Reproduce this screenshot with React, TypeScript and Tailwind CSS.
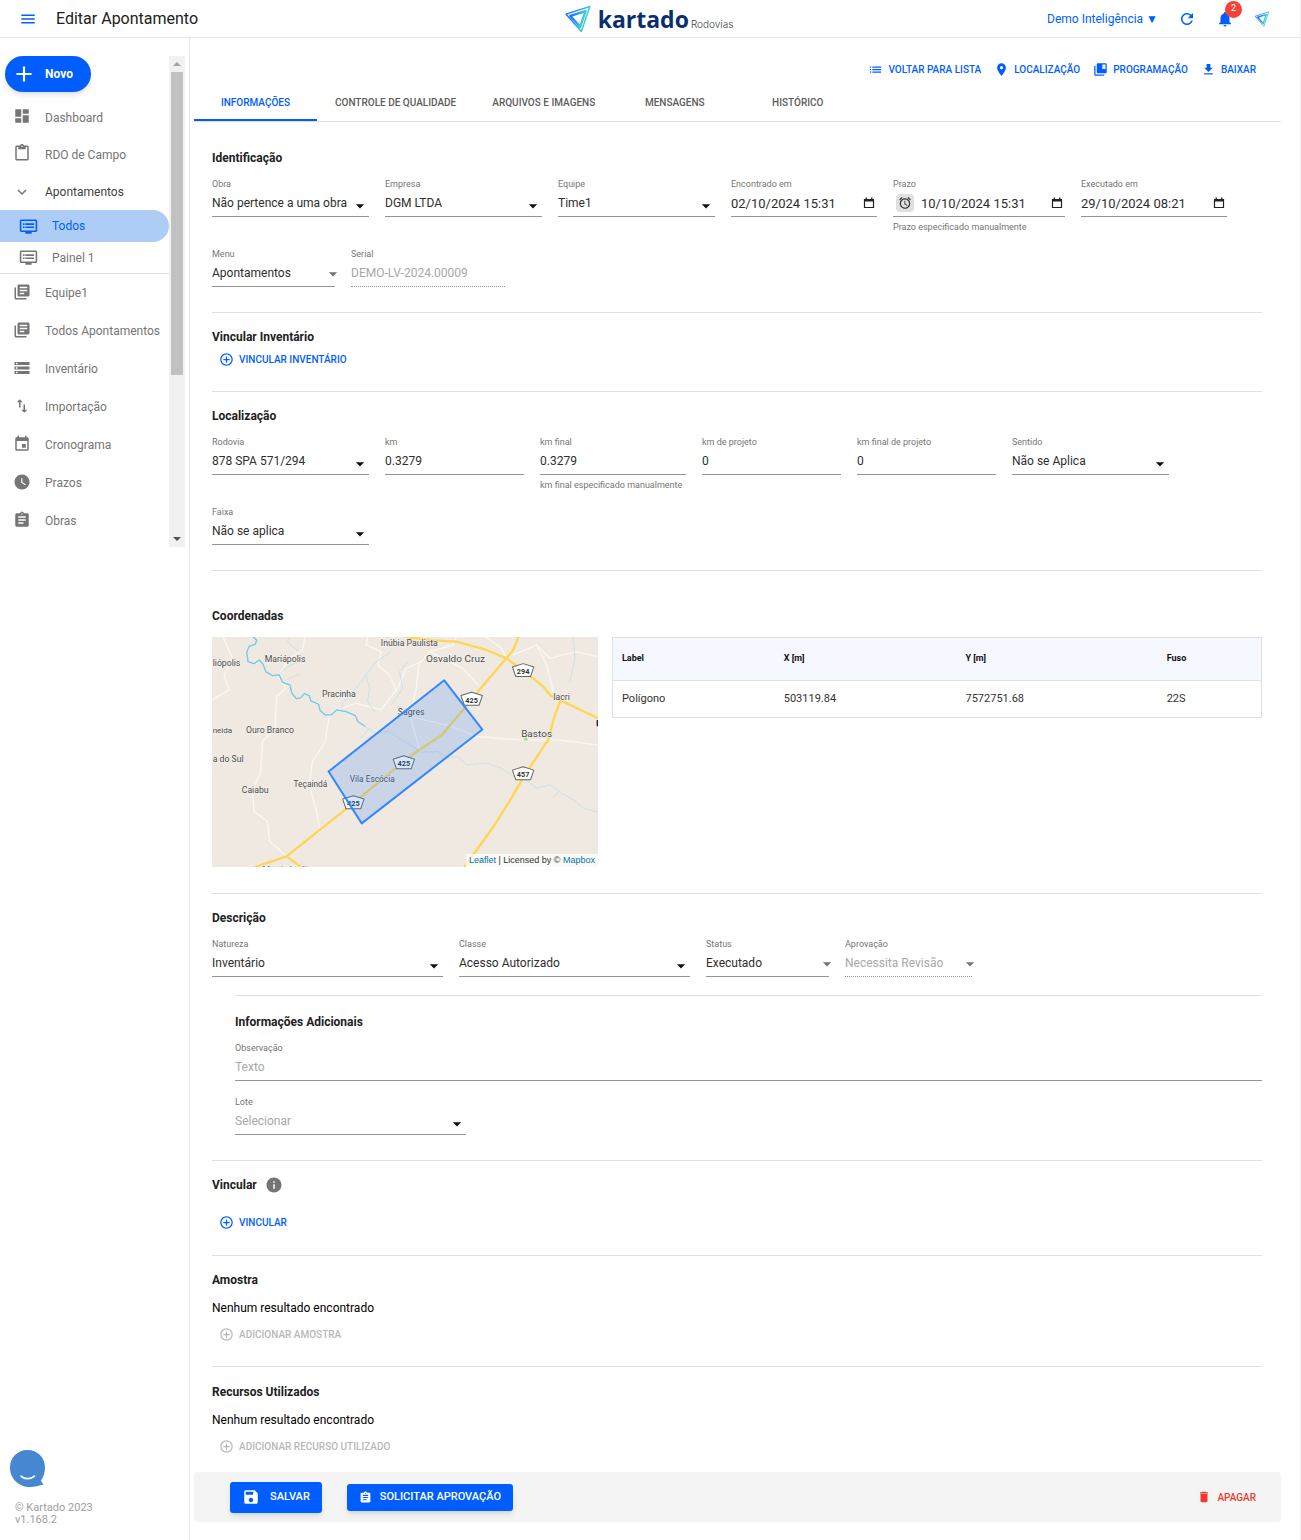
import { useId } from 'react';
import type { ReactNode } from 'react';
import type { IconType } from 'react-icons';
import {
  MdAdd,
  MdAlarm,
  MdArrowDropDown,
  MdAssignment,
  MdCollectionsBookmark,
  MdContentPaste,
  MdControlPoint,
  MdDashboard,
  MdDelete,
  MdDvr,
  MdEvent,
  MdGetApp,
  MdImportExport,
  MdInfo,
  MdKeyboardArrowDown,
  MdLibraryBooks,
  MdList,
  MdLocationOn,
  MdMenu,
  MdNotifications,
  MdRefresh,
  MdSave,
  MdStorage,
  MdWatchLater,
} from 'react-icons/md';

function LogoMark({ className }: { className?: string }) {
  const id = useId();
  return (
    <svg viewBox="68 8 88 92" className={className} fill="none" aria-hidden="true">
      <defs>
        <linearGradient id={id} x1="0" y1="0.3" x2="1" y2="0.6">
          <stop offset="0" stopColor="#1f6fff" />
          <stop offset="0.55" stopColor="#2fa8e8" />
          <stop offset="1" stopColor="#4be3c0" />
        </linearGradient>
      </defs>
      <g stroke={`url(#${id})`} strokeLinejoin="round">
        <path d="M73 38 L151 13 L123 95 Z" strokeWidth="5" />
        <path d="M87 44 L137 28 L119 80 Z" strokeWidth="8" />
      </g>
    </svg>
  );
}

function DateIcon() {
  return (
    <svg viewBox="0 0 12 12" className="h-3 w-3" fill="none" aria-hidden="true">
      <path d="M1.5 2.5h9v8h-9z" stroke="#222" strokeWidth="1.2" />
      <path d="M1 2h10v2.6H1zM2.6.6h1.3V2H2.6zM8.1.6h1.3V2H8.1z" fill="#222" />
    </svg>
  );
}

function Header() {
  return (
    <header className="grid h-[38px] grid-cols-3 items-center border-b border-[#e6e6e6] pr-[30px] pl-[19px]">
      <div className="flex items-center gap-[19px]">
        <button type="button" aria-label="Menu" className="text-[#005eff]">
          <MdMenu className="h-[18px] w-[18px]" />
        </button>
        <h1 className="text-base text-[#212121]">Editar Apontamento</h1>
      </div>
      <div className="flex items-center justify-center pl-2">
        <LogoMark className="h-7 w-7" />
        <span className="ml-1.5 font-['Open_Sans',sans-serif] text-[23px] leading-7 font-bold text-[#0a2f6e]">kartado</span>
        <span className="mt-3 ml-0.5 font-[Inter,sans-serif] text-[10px] font-light text-[#444]">Rodovias</span>
      </div>
      <div className="flex items-center justify-end text-[#005eff]">
        <button type="button" className="text-xs">
          Demo Inteligência ▼
        </button>
        <button type="button" aria-label="Atualizar" className="ml-5">
          <MdRefresh className="h-[18px] w-[18px]" />
        </button>
        <button type="button" aria-label="Notificações" className="relative ml-5">
          <MdNotifications className="h-[18px] w-[18px]" />
          <span className="absolute -top-[9px] left-[9px] flex h-[17px] w-[17px] items-center justify-center rounded-full bg-[#f44336] text-[9px] text-white">
            2
          </span>
        </button>
        <LogoMark className="ml-5 h-4 w-4" />
      </div>
    </header>
  );
}

function NavItem({ icon: Icon, label }: { icon: IconType; label: string }) {
  return (
    <a href="#" className="flex items-center gap-[14px] pl-[13px] text-xs whitespace-nowrap text-[#757575]">
      <Icon className="mb-[3px] h-[18px] w-[18px]" />
      {label}
    </a>
  );
}

const topNav = [
  { icon: MdDashboard, label: 'Dashboard' },
  { icon: MdContentPaste, label: 'RDO de Campo' },
];

const bottomNav = [
  { icon: MdLibraryBooks, label: 'Equipe1' },
  { icon: MdLibraryBooks, label: 'Todos Apontamentos' },
  { icon: MdStorage, label: 'Inventário' },
  { icon: MdImportExport, label: 'Importação' },
  { icon: MdEvent, label: 'Cronograma' },
  { icon: MdWatchLater, label: 'Prazos' },
  { icon: MdAssignment, label: 'Obras' },
];

function Sidebar() {
  return (
    <aside className="flex w-[190px] shrink-0 flex-col border-r border-[#e6e6e6] pt-[18px]">
      <div className="flex">
        <nav className="w-[169px]">
          <button
            type="button"
            className="mb-[7px] ml-[5px] flex h-9 w-[86px] items-center gap-2 rounded-full bg-[#005eff] pl-1.5 text-xs font-bold text-white shadow-md"
          >
            <MdAdd className="h-[26px] w-[26px]" />
            Novo
          </button>
          <div className="grid auto-rows-[37px]">
            {topNav.map((item) => (
              <NavItem key={item.label} {...item} />
            ))}
            <button type="button" className="flex items-center gap-[14px] pl-[13px] text-xs text-[#424242]">
              <MdKeyboardArrowDown className="h-[18px] w-[18px] text-[#757575]" />
              Apontamentos
            </button>
          </div>
          <div className="border-b border-[#e0e0e0] text-xs">
            <a href="#" className="flex h-8 items-center gap-[14px] rounded-r-full bg-[#adcdf7] pl-[19px] text-[#005eff]">
              <MdDvr className="h-[19px] w-[19px]" />
              Todos
            </a>
            <a href="#" className="flex h-[31px] items-center gap-[14px] pl-[19px] text-[#757575]">
              <MdDvr className="h-[19px] w-[19px]" />
              Painel 1
            </a>
          </div>
          <div className="grid auto-rows-[38px]">
            {bottomNav.map((item) => (
              <NavItem key={item.label} {...item} />
            ))}
          </div>
        </nav>
        <div className="flex h-[491px] w-4 flex-col items-center bg-[#f1f1f1]">
          <span className="mt-1.5 h-0 w-0 border-x-4 border-b-4 border-x-transparent border-b-[#a3a3a3]" />
          <span className="mt-1.5 h-[303px] w-3 bg-[#c1c1c1]" />
          <span className="mt-auto mb-1.5 h-0 w-0 border-x-4 border-t-4 border-x-transparent border-t-[#505050]" />
        </div>
      </div>
      <div className="mt-auto pb-3.5">
        <button type="button" aria-label="Chat" className="mb-3.5 ml-2.5 block">
          <svg viewBox="0 0 36 38" className="h-[38px] w-9" fill="none">
            <path
              d="M17.5 0C7.500 0 0 7.500 0 17.500C0 29 9 37 20 37C25 37 29 35.500 33.500 34.500C33 33 31 32 31 30.500C33.500 27 35 22.500 35 17.500C35 7.500 27.500 0 17.500 0Z"
              fill="#4587d0"
            />
            <path d="M11 26C14 29.500 21 29.500 24.500 26" stroke="#fff" strokeWidth="1.600" strokeLinecap="round" />
          </svg>
        </button>
        <p className="ml-[15px] text-[11px] leading-3 text-[#9e9e9e]">
          © Kartado 2023
          <br />
          v1.168.2
        </p>
      </div>
    </aside>
  );
}

const actions = [
  { icon: MdList, label: 'Voltar para lista' },
  { icon: MdLocationOn, label: 'Localização' },
  { icon: MdCollectionsBookmark, label: 'Programação' },
  { icon: MdGetApp, label: 'Baixar' },
];

const tabs = ['Informações', 'Controle de Qualidade', 'Arquivos e Imagens', 'Mensagens', 'Histórico'];

type FieldProps = {
  label: string;
  value?: string;
  width: string;
  kind?: 'select' | 'menu' | 'text' | 'date';
  helper?: string;
  placeholder?: string;
  disabled?: boolean;
  alarm?: boolean;
};

function Field({ label, value = '', width, kind = 'select', helper, placeholder, disabled, alarm }: FieldProps) {
  const id = useId();
  const line = disabled ? 'border-b border-dotted border-[#949494]' : 'border-b border-[#949494]';
  const tone = disabled || !value ? 'text-[#a8a8a8]' : 'text-[#2e2e2e]';
  const size = kind === 'date' ? 'text-[13px]' : 'text-xs';
  return (
    <div className={`${width} min-w-0`}>
      <label htmlFor={id} className="block text-[9px] leading-3 whitespace-nowrap text-[#757575]">
        {label}
      </label>
      <div className={`relative flex h-[27px] items-center ${line}`}>
        {alarm && (
          <button type="button" aria-label="Prazo manual" className="mr-[7px] ml-[3px] rounded-sm bg-[#e0e0e0] p-0.5 text-[#333]">
            <MdAlarm className="h-[14px] w-[14px]" />
          </button>
        )}
        {kind === 'select' || kind === 'menu' ? (
          <>
            <select
              id={id}
              defaultValue={value || placeholder}
              disabled={disabled}
              className={`h-full w-full appearance-none bg-transparent opacity-100 outline-none ${size} ${tone}`}
            >
              <option>{value || placeholder}</option>
            </select>
            <MdArrowDropDown
              className={
                kind === 'menu'
                  ? 'pointer-events-none absolute top-1 -right-2 h-5 w-5 text-[#757575]'
                  : 'pointer-events-none absolute top-1.5 -right-px h-5 w-5 text-[#111]'
              }
            />
          </>
        ) : (
          <input
            id={id}
            type="text"
            defaultValue={value}
            placeholder={placeholder}
            disabled={disabled}
            className={`h-full w-full min-w-0 bg-transparent outline-none placeholder:text-[#a8a8a8] ${size} ${tone}`}
          />
        )}
        {kind === 'date' && (
          <button type="button" aria-label={`Abrir calendário: ${label}`} className="mr-0.5">
            <DateIcon />
          </button>
        )}
      </div>
      {helper && <p className="mt-1 text-[9px] leading-3 whitespace-nowrap text-[#757575]">{helper}</p>}
    </div>
  );
}

function Heading({ children }: { children: ReactNode }) {
  return <h2 className="flex h-5 items-center gap-2 text-xs font-bold text-[#212121]">{children}</h2>;
}

function AddButton({ label, disabled }: { label: string; disabled?: boolean }) {
  return (
    <button
      type="button"
      disabled={disabled}
      className="flex h-6 items-center gap-[5px] pl-[7px] text-[10px] font-medium text-[#005eff] uppercase disabled:text-[#b8b8b8]"
    >
      <MdControlPoint className="h-[15px] w-[15px]" />
      {label}
    </button>
  );
}

const places = [
  { name: 'Inúbia Paulista', x: 544, y: 62, size: 26 },
  { name: 'Mariápolis', x: 197, y: 112, size: 26 },
  { name: 'Osvaldo Cruz', x: 679, y: 112, size: 30 },
  { name: 'liópolis', x: 41, y: 124, size: 26 },
  { name: 'Pracinha', x: 368, y: 215, size: 26 },
  { name: 'Iacri', x: 1060, y: 224, size: 26 },
  { name: 'Sagres', x: 595, y: 271, size: 26 },
  { name: 'neida', x: 41, y: 325, size: 24 },
  { name: 'Ouro Branco', x: 141, y: 323, size: 26 },
  { name: 'Bastos', x: 964, y: 336, size: 30 },
  { name: 'a do Sul', x: 41, y: 413, size: 26 },
  { name: 'Vila Escócia', x: 451, y: 473, size: 25 },
  { name: 'Teçaindá', x: 283, y: 488, size: 25 },
  { name: 'Caiabu', x: 128, y: 506, size: 26 },
  { name: 'Martinópolis', x: 190, y: 745, size: 26 },
];

const shields = [
  { code: '294', x: 970, y: 138 },
  { code: '425', x: 816, y: 224 },
  { code: '425', x: 613, y: 415 },
  { code: '457', x: 970, y: 448 },
  { code: '425', x: 462, y: 535 },
];

function CoordinateMap() {
  return (
    <div className="relative h-[230px] w-[386px] shrink-0 overflow-hidden bg-[#efe9e1]">
      <svg viewBox="39 36 1155 691" preserveAspectRatio="none" className="h-full w-full" fill="none">
        <g stroke="#faf7f3" strokeWidth="4" strokeLinejoin="round">
          <path d="M40 225 L90 195 L75 150 L100 100 L72 36" />
          <path d="M235 150 L260 190 L232 215 L228 310 L190 350 L185 440 L160 500 L165 560 L205 590 L212 650 L262 695" />
          <path d="M240 150 L270 100 L310 75 L316 36" />
          <path d="M390 270 L378 350 L340 410 L330 480 L352 560 L360 612" />
          <path d="M400 262 L470 235 L545 255 L590 195 L570 150 L535 120 L545 80 L500 60 L505 36" />
          <path d="M590 200 L620 130 L665 110 L690 80 L760 60 L770 36" />
          <path d="M690 80 L790 130 L835 180" />
          <path d="M632 275 L662 380" />
          <path d="M632 275 L760 305 L830 335 L960 345 L1070 345 L1194 360" />
          <path d="M660 110 L650 190 L632 275" />
          <path d="M920 100 L905 70 L860 36" />
          <path d="M940 90 L1010 60 L1050 100 L1130 80 L1190 95" />
          <path d="M1060 200 L1040 120 L1010 60" />
        </g>
        <g stroke="#b9dde9" strokeWidth="2" strokeLinejoin="round">
          <path d="M525 262 L505 230 L510 190 L500 150 L530 110 L575 80" />
          <path d="M425 262 L430 235 L470 190 L500 150" />
          <path d="M575 240 L610 190 L600 140 L625 110" />
          <path d="M485 340 L510 310 M238 150 L265 125 L300 110 M262 165 L300 148" />
          <path d="M495 305 L530 325 L570 320 L605 345 L640 365 L665 382 L715 380 L745 400 L775 395 L800 420 L860 415 L905 430 L940 455 L985 470 L1010 490 L1050 480 L1085 505 L1120 525 L1150 550 L1194 562" />
          <path d="M1120 36 L1125 100 L1110 170 M1060 520 L1075 500" />
          <path d="M272 36 L265 50 L285 70 L300 80" />
        </g>
        <path
          d="M162 36 L173 46 L168 58 L150 64 L143 82 L147 110 L165 116 L180 105 L192 118 L200 140 L220 152 L240 150 L250 172 L272 180 L278 205 L292 222 L305 218 L315 206 L330 212 L335 228 L358 238 L362 256 L378 270 L395 270 L412 255 L440 260 L468 272 L475 290 L498 305"
          stroke="#74c8e8"
          strokeWidth="4"
          strokeLinejoin="round"
        />
        <g stroke="#fdd752" strokeWidth="7" strokeLinejoin="round">
          <path d="M620 36 L700 46 L770 50 L860 75 L920 100 L975 140 L1030 185 L1052 212 L1082 226 L1194 280" />
          <path d="M956 36 L940 75 L920 100 L860 170 L790 255 L727 330 L640 388 L550 462 L462 535 L262 695 L168 727" />
          <path d="M1082 226 L1062 280 L1045 345 L975 450 L935 520 L885 600 L795 727" />
          <path d="M262 695 L305 727" />
        </g>
        <circle cx="978" cy="343" r="5" fill="#a6dc8c" />
        <g fill="#4a4a4a" stroke="#f7f3ee" strokeWidth="3" paintOrder="stroke" fontFamily="Roboto, sans-serif">
          {places.map((place) => (
            <text key={place.name} x={place.x} y={place.y} fontSize={place.size}>
              {place.name}
            </text>
          ))}
        </g>
        {shields.map((shield) => (
          <g key={`${shield.code}-${shield.x}`} transform={`translate(${shield.x} ${shield.y})`}>
            <path d="M0 -22 L32 -12 L22 17 H-22 L-32 -12 Z" fill="#fff" stroke="#666" strokeWidth="3" strokeLinejoin="round" />
            <text y="9" textAnchor="middle" fontSize="22" fontWeight="700" fill="#333" fontFamily="Roboto, sans-serif">
              {shield.code}
            </text>
          </g>
        ))}
        <path d="M1190 285 H1194 V304 H1190 Z" fill="#222" />
        <path
          d="M734 166 L848 314 L487 596 L388 440 Z"
          fill="#3388ff"
          fillOpacity="0.2"
          stroke="#3388ff"
          strokeWidth="6"
          strokeLinejoin="round"
        />
      </svg>
      <p className="absolute right-0 bottom-0 bg-white/70 px-[3px] font-['Liberation_Sans',sans-serif] text-[9px] leading-[13px] text-[#333]">
        <a href="#" className="text-[#0078a8]">Leaflet</a> | Licensed by © <a href="#" className="text-[#0078a8]">Mapbox</a>
      </p>
    </div>
  );
}

function CoordinateTable() {
  return (
    <table className="w-full border border-[#e0e0e0] text-left text-[11px]">
      <thead>
        <tr className="h-[43px] border-b border-[#e0e0e0] bg-[#f5f8ff] text-[9px] text-[#111]">
          <th className="w-[25%] pl-[9px] font-bold">Label</th>
          <th className="w-[28%] pl-[9px] font-bold">X [m]</th>
          <th className="w-[31%] pl-[9px] font-bold">Y [m]</th>
          <th className="w-[16%] pl-[9px] font-bold">Fuso</th>
        </tr>
      </thead>
      <tbody>
        <tr className="h-[37px] text-[#333]">
          <td className="pl-[9px]">Polígono</td>
          <td className="pl-[9px]">503119.84</td>
          <td className="pl-[9px]">7572751.68</td>
          <td className="pl-[9px]">22S</td>
        </tr>
      </tbody>
    </table>
  );
}

export default function App() {
  return (
    <div className="flex min-h-screen flex-col border-r border-[#f0f0f0] bg-white font-[Roboto,sans-serif] text-[#212121]">
      <Header />
      <div className="flex flex-1">
        <Sidebar />
        <main className="min-w-0 flex-1 pr-[19px] pb-[18px] pl-1">
          <div className="flex h-[46px] items-end justify-end gap-[13px] pr-[25px] text-[10px] font-medium text-[#005eff]">
            {actions.map(({ icon: Icon, label }) => (
              <button key={label} type="button" className="flex h-[30px] items-center gap-[5px] uppercase">
                <Icon className="h-[15px] w-[15px]" />
                {label}
              </button>
            ))}
          </div>
          <div role="tablist" className="flex h-[38px] border-b border-[#e0e0e0] text-[10px] font-medium">
            {tabs.map((tab, index) => (
              <button
                key={tab}
                type="button"
                role="tab"
                aria-selected={index === 0}
                className={
                  index === 0
                    ? 'min-w-[123px] border-b-2 border-[#005eff] px-[18px] pt-0.5 text-[#005eff] uppercase'
                    : 'min-w-[123px] border-b-2 border-transparent px-[18px] pt-0.5 text-[#5c5c5c] uppercase'
                }
              >
                {tab}
              </button>
            ))}
          </div>

          <div className="divide-y divide-[#e0e0e0] pr-[19px] pl-[18px]">
            <section className="pt-[26px] pb-[25px]">
              <Heading>Identificação</Heading>
              <div className="mt-2.5 flex flex-wrap gap-x-4 gap-y-[15px]">
                <Field label="Obra" value="Não pertence a uma obra" width="w-[157px]" />
                <Field label="Empresa" value="DGM LTDA" width="w-[157px]" />
                <Field label="Equipe" value="Time1" width="w-[157px]" />
                <Field label="Encontrado em" value="02/10/2024 15:31" width="w-[146px]" kind="date" />
                <Field label="Prazo" value="10/10/2024 15:31" width="w-[172px]" kind="date" helper="Prazo especificado manualmente" alarm />
                <Field label="Executado em" value="29/10/2024 08:21" width="w-[146px]" kind="date" />
                <Field label="Menu" value="Apontamentos" width="w-[123px]" kind="menu" />
                <Field label="Serial" value="DEMO-LV-2024.00009" width="w-[154px]" kind="text" disabled />
              </div>
            </section>

            <section className="pt-3.5 pb-5">
              <Heading>Vincular Inventário</Heading>
              <AddButton label="Vincular Inventário" />
            </section>

            <section className="pt-3.5 pb-[25px]">
              <Heading>Localização</Heading>
              <div className="mt-2.5 flex flex-wrap gap-x-4 gap-y-[15px]">
                <Field label="Rodovia" value="878 SPA 571/294" width="w-[157px]" />
                <Field label="km" value="0.3279" width="w-[139px]" kind="text" />
                <Field label="km final" value="0.3279" width="w-[146px]" kind="text" helper="km final especificado manualmente" />
                <Field label="km de projeto" value="0" width="w-[139px]" kind="text" />
                <Field label="km final de projeto" value="0" width="w-[139px]" kind="text" />
                <Field label="Sentido" value="Não se Aplica" width="w-[157px]" />
                <Field label="Faixa" value="Não se aplica" width="w-[157px]" />
              </div>
            </section>

            <section className="pt-[35px] pb-[26px]">
              <Heading>Coordenadas</Heading>
              <div className="mt-[11px] flex items-start gap-3.5">
                <CoordinateMap />
                <CoordinateTable />
              </div>
            </section>

            <section className="pt-3.5 pb-[25px]">
              <Heading>Descrição</Heading>
              <div className="mt-2.5 flex flex-wrap gap-x-4 gap-y-[15px]">
                <Field label="Natureza" value="Inventário" width="w-[231px]" />
                <Field label="Classe" value="Acesso Autorizado" width="w-[231px]" />
                <Field label="Status" value="Executado" width="w-[123px]" kind="menu" />
                <Field label="Aprovação" value="Necessita Revisão" width="w-[127px]" kind="menu" disabled />
              </div>
              <div className="mt-[18px] ml-[23px] border-t border-[#e0e0e0] pt-4">
                <Heading>Informações Adicionais</Heading>
                <div className="mt-2.5 flex flex-col gap-[15px]">
                  <Field label="Observação" placeholder="Texto" width="w-full" kind="text" />
                  <Field label="Lote" placeholder="Selecionar" width="w-[231px]" />
                </div>
              </div>
            </section>

            <section className="pt-3.5 pb-[21px]">
              <Heading>
                Vincular <MdInfo className="h-[18px] w-[18px] text-[#757575]" />
              </Heading>
              <div className="mt-[15px]">
                <AddButton label="Vincular" />
              </div>
            </section>

            <section className="pt-3.5 pb-5">
              <Heading>Amostra</Heading>
              <p className="mt-2 mb-1 text-xs leading-5 text-black">Nenhum resultado encontrado</p>
              <AddButton label="Adicionar Amostra" disabled />
            </section>

            <section className="pt-[15px] pb-[14px]">
              <Heading>Recursos Utilizados</Heading>
              <p className="mt-2 mb-1 text-xs leading-5 text-black">Nenhum resultado encontrado</p>
              <AddButton label="Adicionar Recurso Utilizado" disabled />
            </section>
          </div>

          <footer className="flex h-[50px] items-center rounded-sm bg-[#f4f4f4] pr-[25px] pl-9 font-medium uppercase">
            <button type="button" className="flex h-[31px] items-center gap-2.5 rounded-[3px] bg-[#005eff] px-3 text-[11px] text-white uppercase shadow-md">
              <MdSave className="h-[18px] w-[18px]" />
              Salvar
            </button>
            <button type="button" className="ml-[25px] flex h-[27px] items-center gap-2 rounded-[3px] bg-[#005eff] px-3 text-[11px] text-white uppercase shadow-md">
              <MdAssignment className="h-[13px] w-[13px]" />
              Solicitar Aprovação
            </button>
            <button type="button" className="ml-auto flex items-center gap-1.5 text-[10px] text-[#f03a2e] uppercase">
              <MdDelete className="h-[14px] w-[14px]" />
              Apagar
            </button>
          </footer>
        </main>
      </div>
    </div>
  );
}
